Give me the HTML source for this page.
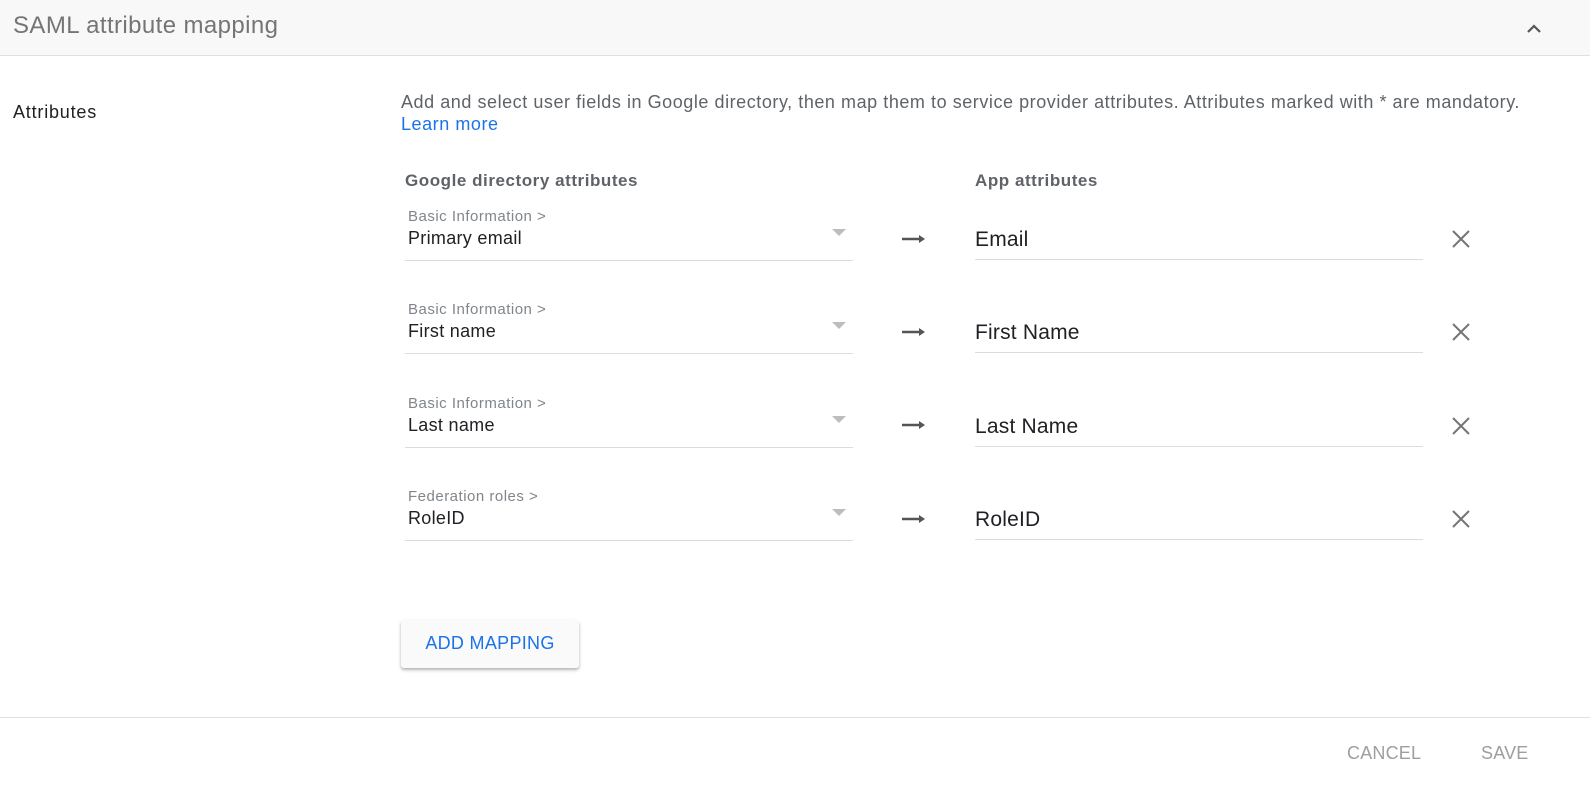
<!DOCTYPE html>
<html><head><style>
body{margin:0;width:1590px;height:794px;background:#fff;font-family:"Liberation Sans",sans-serif;position:relative;overflow:hidden}
.a{position:absolute;white-space:nowrap}
.hdr{position:absolute;left:0;top:0;width:1590px;height:55px;background:#f8f8f8;border-bottom:1px solid #e0e0e0}
.lab{font-size:15px;letter-spacing:0.5px;color:#80868b}
.val{font-size:18px;letter-spacing:0.3px;color:#202124}
.app{font-size:21px;letter-spacing:0.2px;color:#202124}
.line{position:absolute;height:1px;background:#dadce0}
.tri{position:absolute;width:0;height:0;border-left:7px solid transparent;border-right:7px solid transparent;border-top:7px solid #bdbdbd}
</style></head><body>
<div class="hdr"></div>
<div class="a" style="left:13px;top:12px;font-size:24px;letter-spacing:0.4px;color:#757575">SAML attribute mapping</div>
<svg class="a" style="left:1524px;top:20px" width="20" height="16"><path d="M4 12 L10 6 L16 12" stroke="#555" stroke-width="2.2" fill="none"/></svg>
<div class="a" style="left:13px;top:102px;font-size:18px;letter-spacing:0.8px;color:#202124">Attributes</div>
<div class="a" style="left:401px;top:92px;font-size:18px;letter-spacing:0.55px;color:#5f6368">Add and select user fields in Google directory, then map them to service provider attributes. Attributes marked with * are mandatory.</div>
<div class="a" style="left:401px;top:114px;font-size:18px;letter-spacing:0.55px;color:#1a73e8">Learn more</div>
<div class="a" style="left:405px;top:171px;font-size:17px;letter-spacing:0.55px;font-weight:bold;color:#5f6368">Google directory attributes</div>
<div class="a" style="left:975px;top:171px;font-size:17px;letter-spacing:0.55px;font-weight:bold;color:#5f6368">App attributes</div>

<div class="a lab" style="left:408px;top:208px">Basic Information &gt;</div>
<div class="a val" style="left:408px;top:228px">Primary email</div>
<div class="tri" style="left:832px;top:229px"></div>
<div class="line" style="left:405px;top:260px;width:448px"></div>
<svg class="a" style="left:902px;top:232px" width="24" height="14"><path d="M0 7H20" stroke="#555" stroke-width="2.4"/><path d="M17 3L23 7L17 11Z" fill="#555"/></svg>
<div class="a app" style="left:975px;top:228px">Email</div>
<div class="line" style="left:975px;top:259px;width:448px"></div>
<svg class="a" style="left:1451px;top:229px" width="20" height="20"><path d="M2 2L18 18M18 2L2 18" stroke="#757575" stroke-width="2"/></svg>

<div class="a lab" style="left:408px;top:301px">Basic Information &gt;</div>
<div class="a val" style="left:408px;top:321px">First name</div>
<div class="tri" style="left:832px;top:322px"></div>
<div class="line" style="left:405px;top:353px;width:448px"></div>
<svg class="a" style="left:902px;top:325px" width="24" height="14"><path d="M0 7H20" stroke="#555" stroke-width="2.4"/><path d="M17 3L23 7L17 11Z" fill="#555"/></svg>
<div class="a app" style="left:975px;top:321px">First Name</div>
<div class="line" style="left:975px;top:352px;width:448px"></div>
<svg class="a" style="left:1451px;top:322px" width="20" height="20"><path d="M2 2L18 18M18 2L2 18" stroke="#757575" stroke-width="2"/></svg>

<div class="a lab" style="left:408px;top:395px">Basic Information &gt;</div>
<div class="a val" style="left:408px;top:415px">Last name</div>
<div class="tri" style="left:832px;top:416px"></div>
<div class="line" style="left:405px;top:447px;width:448px"></div>
<svg class="a" style="left:902px;top:418px" width="24" height="14"><path d="M0 7H20" stroke="#555" stroke-width="2.4"/><path d="M17 3L23 7L17 11Z" fill="#555"/></svg>
<div class="a app" style="left:975px;top:415px">Last Name</div>
<div class="line" style="left:975px;top:446px;width:448px"></div>
<svg class="a" style="left:1451px;top:416px" width="20" height="20"><path d="M2 2L18 18M18 2L2 18" stroke="#757575" stroke-width="2"/></svg>

<div class="a lab" style="left:408px;top:488px">Federation roles &gt;</div>
<div class="a val" style="left:408px;top:508px">RoleID</div>
<div class="tri" style="left:832px;top:509px"></div>
<div class="line" style="left:405px;top:540px;width:448px"></div>
<svg class="a" style="left:902px;top:512px" width="24" height="14"><path d="M0 7H20" stroke="#555" stroke-width="2.4"/><path d="M17 3L23 7L17 11Z" fill="#555"/></svg>
<div class="a app" style="left:975px;top:508px">RoleID</div>
<div class="line" style="left:975px;top:539px;width:448px"></div>
<svg class="a" style="left:1451px;top:509px" width="20" height="20"><path d="M2 2L18 18M18 2L2 18" stroke="#757575" stroke-width="2"/></svg>

<div class="a" style="left:401px;top:620px;width:178px;height:48px;background:#fafafa;border-radius:3px;box-shadow:0 2px 3px rgba(0,0,0,.3);"></div>
<div class="a" style="left:401px;top:633px;width:178px;text-align:center;font-size:18px;letter-spacing:0.3px;color:#1a73e8">ADD MAPPING</div>
<div class="line" style="left:0;top:717px;width:1590px;background:#e0e0e0"></div>
<div class="a" style="left:1347px;top:743px;font-size:18px;letter-spacing:0.2px;color:#9e9e9e">CANCEL</div>
<div class="a" style="left:1481px;top:743px;font-size:18px;letter-spacing:0.2px;color:#9e9e9e">SAVE</div>
</body></html>
